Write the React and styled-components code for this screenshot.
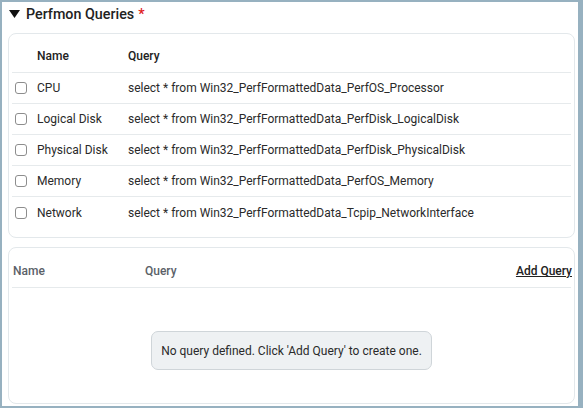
import React from "react";
import styled, { createGlobalStyle } from "styled-components";

const GlobalStyle = createGlobalStyle`
  html, body {
    margin: 0;
    padding: 0;
    background: #ffffff;
    font-family: Roboto, "Liberation Sans", Arial, sans-serif;
    color: #222;
  }
  * { box-sizing: border-box; }
`;

const Frame = styled.div`
  width: 583px;
  height: 408px;
  border-style: solid;
  border-color: #97b1c0;
  border-width: 2px 5px 2px 2px;
  padding: 0 3px 0 6px;
  overflow: hidden;
  background: #fff;
`;

const SectionTitle = styled.div`
  display: flex;
  align-items: center;
  height: 23px;
  padding-left: 1px;
  font-size: 14.3px;
  font-weight: 500;
  color: #222;
  gap: 6px;
`;

const Required = styled.span`
  color: #e0191b;
  margin-left: 4px;
`;

const Card = styled.div`
  border: 1px solid #e3e8eb;
  border-radius: 8px;
  padding: ${(p) => p.$pad};
  margin-top: ${(p) => p.$top}px;
`;

const Row = styled.div`
  display: grid;
  grid-template-columns: ${(p) => p.$cols};
  align-items: center;
  height: ${(p) => p.$h}px;
  padding: ${(p) => p.$pad || "0 0 0 3px"};
  border-bottom: ${(p) => (p.$last ? "none" : "1px solid #e6eaec")};
  font-size: 12px;
`;

const HeadCell = styled.div`
  font-weight: 500;
  color: ${(p) => p.$color || "#222"};
  font-size: 12px;
`;

const Cell = styled.div`
  color: #2a2a2a;
  white-space: nowrap;
`;

const Check = styled.input.attrs({ type: "checkbox" })`
  appearance: none;
  margin: 0;
  width: 12px;
  height: 12px;
  border: 1px solid #8d8d8d;
  border-radius: 3px;
  background: #fff;
`;

const AddLink = styled.a`
  justify-self: end;
  margin-right: -3px;
  font-weight: 500;
  color: #222;
  text-decoration: underline;
  cursor: pointer;
`;

const Empty = styled.div`
  display: flex;
  justify-content: center;
  padding: 43px 0 33px;
`;

const Notice = styled.div`
  width: 281px;
  height: 39px;
  display: flex;
  align-items: center;
  justify-content: center;
  background: #eef1f3;
  border: 1px solid #cfd5d9;
  border-radius: 7px;
  font-size: 12px;
  color: #2a2a2a;
`;

const queries = [
  ["CPU", "select * from Win32_PerfFormattedData_PerfOS_Processor"],
  ["Logical Disk", "select * from Win32_PerfFormattedData_PerfDisk_LogicalDisk"],
  ["Physical Disk", "select * from Win32_PerfFormattedData_PerfDisk_PhysicalDisk"],
  ["Memory", "select * from Win32_PerfFormattedData_PerfOS_Memory"],
  ["Network", "select * from Win32_PerfFormattedData_Tcpip_NetworkInterface"],
];

export default function App() {
  return (
    <>
      <GlobalStyle />
      <Frame>
        <SectionTitle>
          <svg width="11" height="8" viewBox="0 0 11 8">
            <polygon points="0,0 11,0 5.5,8" fill="#111" />
          </svg>
          <span>
            Perfmon Queries<Required>*</Required>
          </span>
        </SectionTitle>

        <Card $top={8} $pad="5px 3px 9px 3px">
          <Row $cols="22px 91px 1fr" $h={34}>
            <span />
            <HeadCell>Name</HeadCell>
            <HeadCell>Query</HeadCell>
          </Row>
          {queries.map(([name, q], i) => (
            <Row key={name} $cols="22px 91px 1fr" $h={31} $last={i === queries.length - 1}>
              <Check />
              <Cell>{name}</Cell>
              <Cell>{q}</Cell>
            </Row>
          ))}
        </Card>

        <Card $top={9} $pad="0 3px">
          <Row $cols="132px 1fr auto" $h={40} $pad="7px 2px 0 1px">
            <HeadCell $color="#5b6168">Name</HeadCell>
            <HeadCell $color="#5b6168">Query</HeadCell>
            <AddLink>Add Query</AddLink>
          </Row>
          <Empty>
            <Notice>No query defined. Click 'Add Query' to create one.</Notice>
          </Empty>
        </Card>
      </Frame>
    </>
  );
}
